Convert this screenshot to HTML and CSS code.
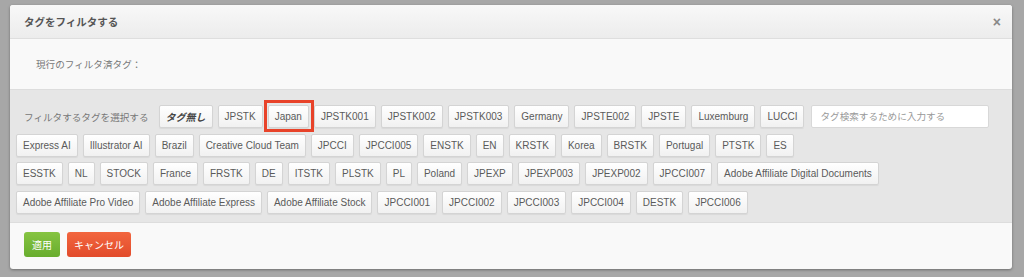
FILE: index.html
```html
<!DOCTYPE html>
<html>
<head>
<meta charset="UTF-8">
<title>タグをフィルタする</title>
<link rel="stylesheet" href="styles.css">
</head>
<body>
<div class="modal">
	<div class="modal-head">
		<span class="modal-title">タグをフィルタする</span>
		<span class="modal-close">×</span>
	</div>
	<div class="modal-current">現行のフィルタ済タグ：</div>
	<div class="tag-area">
		<div class="tag-row">
			<span class="tag-label">フィルタするタグを選択する</span>
			<span class="tag tag-none">タグ無し</span>
			<span class="tag">JPSTK</span>
			<span class="tag tag-mark">Japan</span>
			<span class="tag">JPSTK001</span>
			<span class="tag">JPSTK002</span>
			<span class="tag">JPSTK003</span>
			<span class="tag">Germany</span>
			<span class="tag">JPSTE002</span>
			<span class="tag">JPSTE</span>
			<span class="tag">Luxemburg</span>
			<span class="tag">LUCCI</span>
			<input class="tag-search" type="text" placeholder="タグ検索するために入力する">
		</div>
		<div class="tag-row">
			<span class="tag">Express AI</span>
			<span class="tag">Illustrator AI</span>
			<span class="tag">Brazil</span>
			<span class="tag">Creative Cloud Team</span>
			<span class="tag">JPCCI</span>
			<span class="tag">JPCCI005</span>
			<span class="tag">ENSTK</span>
			<span class="tag">EN</span>
			<span class="tag">KRSTK</span>
			<span class="tag">Korea</span>
			<span class="tag">BRSTK</span>
			<span class="tag">Portugal</span>
			<span class="tag">PTSTK</span>
			<span class="tag">ES</span>
		</div>
		<div class="tag-row">
			<span class="tag">ESSTK</span>
			<span class="tag">NL</span>
			<span class="tag">STOCK</span>
			<span class="tag">France</span>
			<span class="tag">FRSTK</span>
			<span class="tag">DE</span>
			<span class="tag">ITSTK</span>
			<span class="tag">PLSTK</span>
			<span class="tag">PL</span>
			<span class="tag">Poland</span>
			<span class="tag">JPEXP</span>
			<span class="tag">JPEXP003</span>
			<span class="tag">JPEXP002</span>
			<span class="tag">JPCCI007</span>
			<span class="tag">Adobe Affiliate Digital Documents</span>
		</div>
		<div class="tag-row">
			<span class="tag">Adobe Affiliate Pro Video</span>
			<span class="tag">Adobe Affiliate Express</span>
			<span class="tag">Adobe Affiliate Stock</span>
			<span class="tag">JPCCI001</span>
			<span class="tag">JPCCI002</span>
			<span class="tag">JPCCI003</span>
			<span class="tag">JPCCI004</span>
			<span class="tag">DESTK</span>
			<span class="tag">JPCCI006</span>
		</div>
	</div>
	<div class="modal-foot">
		<button class="btn btn-apply">適用</button>
		<button class="btn btn-cancel">キャンセル</button>
	</div>
</div>
</body>
</html>
```

FILE: styles.css
```css
body{
	margin: 0;
	padding: 5px 0 0 10px;
	background: #a7a7a7;
	font-family: "Liberation Sans", Arial, "Noto Sans CJK JP", sans-serif;
	height: 277px;
	box-sizing: border-box;
	overflow: hidden;
}
.modal{
	width: 1002px;
	background: #f9f9f9;
	border-radius: 3px;
	box-shadow: 0 1px 3px rgba(0,0,0,.35);
	overflow: hidden;
}
.modal-head{
	height: 33px;
	padding: 0 11px 0 14px;
	display: flex;
	align-items: center;
	justify-content: space-between;
	background: linear-gradient(#f8f8f8, #ececec);
	border-bottom: 1px solid #dedede;
}
.modal-title{
	font-size: 10.5px;
	font-weight: bold;
	color: #555;
}
.modal-close{
	font-size: 14px;
	font-weight: bold;
	color: #888;
}
.modal-current{
	height: 50px;
	padding-left: 26px;
	display: flex;
	align-items: center;
	font-size: 9.6px;
	color: #777;
}
.tag-area{
	background: #e6e6e6;
	border-top: 1px solid #dddddd;
	border-bottom: 1px solid #dddddd;
	padding: 15px 6px 8px;
	display: flex;
	flex-direction: column;
	gap: 5.5px;
}
.tag-row{
	display: flex;
	align-items: center;
	gap: 5px;
}
.tag-label{
	flex-shrink: 0;
	white-space: nowrap;
	margin: 0 5px 0 8px;
	font-size: 9.6px;
	color: #777;
}
.tag{
	position: relative;
	flex-shrink: 0;
	height: 23px;
	padding: 0 6px;
	display: flex;
	align-items: center;
	box-sizing: border-box;
	font-size: 10px;
	color: #5a5a5a;
	white-space: nowrap;
	background: linear-gradient(#ffffff, #f1f1f1);
	border: 1px solid #d4d4d4;
	border-radius: 2px;
	box-shadow: 0 1px 1px rgba(0,0,0,.06);
}
.tag-none{
	font-weight: bold;
	font-style: italic;
	color: #444;
}
.tag-mark::after{
	content: '';
	position: absolute;
	top: -6px;
	bottom: -5px;
	left: -5px;
	right: -6px;
	border: 3px solid #e8432a;
}
.tag-search{
	width: 178px;
	height: 23px;
	box-sizing: border-box;
	margin-left: 2px;
	padding: 0 8px;
	border: 1px solid #d8d8d8;
	border-radius: 2px;
	background: #fff;
	font-family: inherit;
	font-size: 9.6px;
	outline: none;
}
.tag-search::placeholder{
	color: #999;
}
.modal-foot{
	height: 46px;
	padding: 9px 14px 0;
	box-sizing: border-box;
	display: flex;
	align-items: flex-start;
	gap: 7px;
}
.btn{
	height: 25px;
	border: none;
	border-radius: 3px;
	padding: 0;
	color: #fff;
	font-family: inherit;
	font-size: 10px;
}
.btn-apply{
	width: 36px;
	background: linear-gradient(#86c442, #68ad2e);
}
.btn-cancel{
	width: 64px;
	background: linear-gradient(#f2663f, #e24b2b);
}
```
